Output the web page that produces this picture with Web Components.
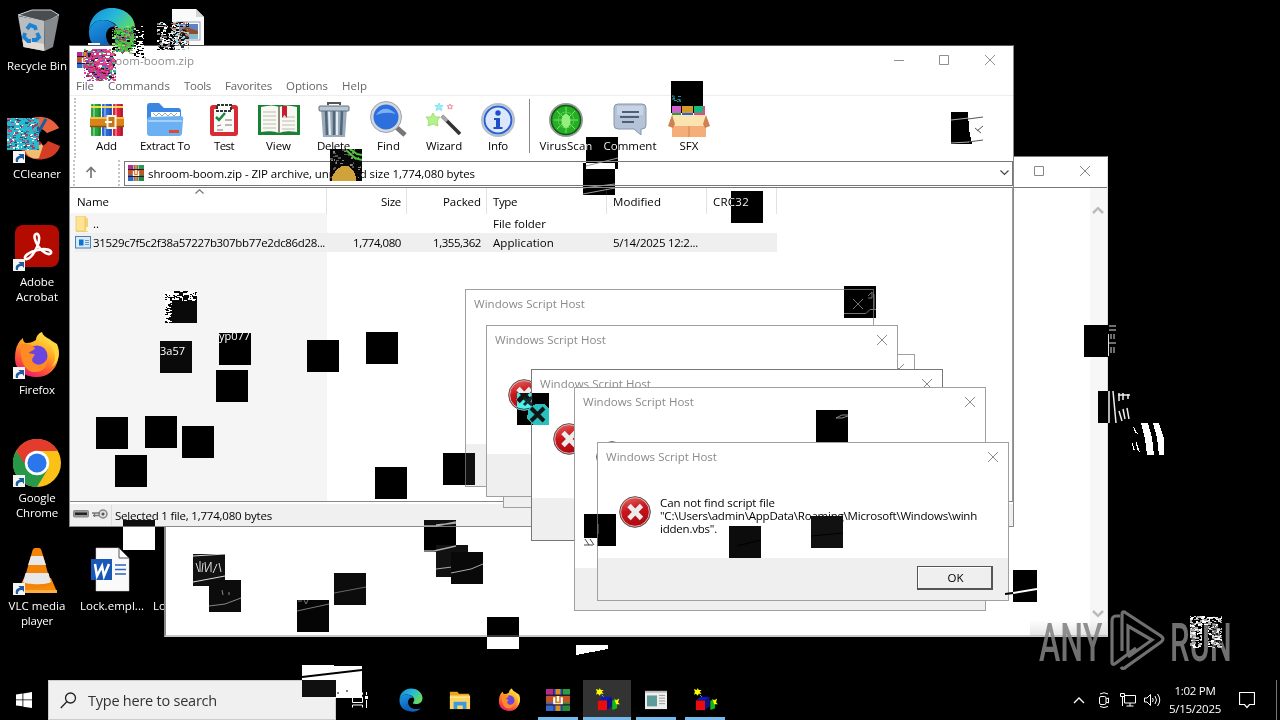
<!DOCTYPE html>
<html lang="en">
<head>
<meta charset="utf-8">
<title>Desktop</title>
<style>
html,body{margin:0;width:1280px;height:720px;overflow:hidden;background:#000}
body{font:11.5px/15px "Open Sans","Noto Sans",sans-serif;color:#000}
</style>
</head>
<body>
<desktop-shell></desktop-shell>
<script>
/* Shared base: clones markup into an open shadow root */
class Base extends HTMLElement {
  constructor(){ super(); this.attachShadow({mode:'open'}); }
  connectedCallback(){
    if (this.ready) return; this.ready = true;
    const t = document.createElement('template');
    t.innerHTML = this.view();
    this.shadowRoot.append(t.content.cloneNode(true));
    if (this.after) this.after();
  }
  a(n,d=''){ return this.hasAttribute(n) ? this.getAttribute(n) : d; }
}

const books = `<g><rect x="1" y="1" width="10" height="32" rx="1" fill="#27a53a"/><rect x="12" y="1" width="10" height="32" rx="1" fill="#2b65d9"/><rect x="23" y="1" width="10" height="32" rx="1" fill="#d9213f"/>
<path d="M4 1v32M15 1v32M26 1v32" stroke="#fff" stroke-opacity=".35" stroke-width="2"/><path d="M9.500 1v32M20.500 1v32M31.500 1v32" stroke="#000" stroke-opacity=".2" stroke-width="2"/>
<path d="M1 4h10M12 4h10M23 4h10" stroke="#f2dc4a" stroke-width="2"/><rect y="14" width="34" height="10" fill="#d98419"/><path d="M0 15h34" stroke="#f6c04e" stroke-width="2"/><path d="M0 23.500h34" stroke="#8e4d0b" stroke-width="1.500"/>
<rect x="17.500" y="13" width="8" height="12" fill="#c4761a" stroke="#fff4d8" stroke-width="2"/><path d="M15 19h7" stroke="#fff" stroke-width="2"/></g>`;
const rarSmall = `<rect width="5" height="16" fill="#b52a8a"/><rect x="5.500" width="5" height="16" fill="#3064c8"/><rect x="11" width="5" height="16" fill="#2c9c45"/><rect y="5" width="16" height="6" fill="#c2542a"/><rect x="0" y="10" width="5" height="6" fill="#2f69c9"/><rect x="11" y="10" width="5" height="6" fill="#258b3a"/><path d="M6.500 0h3v16h-3z" fill="#d88c22"/><path d="M5.500 6v5h5V6M8 5v4" stroke="#fff" stroke-width="1.400" fill="none"/><path d="M0 4.500h16M0 11.500h16" stroke="#301634"/>`;
const edge = `<defs><linearGradient id="eg" x2="1" y2=".6"><stop stop-color="#1487d6"/><stop offset=".5" stop-color="#25b8dc"/><stop offset="1" stop-color="#63dd5c"/></linearGradient><linearGradient id="eb" x2=".6" y2="1"><stop stop-color="#1c9be6"/><stop offset="1" stop-color="#0b4fa8"/></linearGradient></defs>
<path d="M1 23C2 9 12 1 24 1c14 0 23 10 23 19 0 8-6 12-13 12-6 0-7-2-5-4 1-2 2-4 1-7-2-5-8-8-15-8C8 13 3 17 1 23z" fill="url(#eg)"/><path d="M1 23c3-7 8-10 14-10 6 0 11 3 14 7-6-2-11 2-11 9 0 8 7 15 18 14 3 0 5-1 7-2-6 5-12 6-18 6C10 47 0 37 1 23z" fill="url(#eb)"/><path d="M18 29c0 8 7 13 16 13 5 0 8-1 10-3-4 6-10 8-17 8-9-1-14-10-9-18z" fill="#1463b8"/>`;
const fox = `<defs><linearGradient id="fg" x1=".8" x2=".3" y2="1"><stop stop-color="#fff04a"/><stop offset=".4" stop-color="#ffab24"/><stop offset=".75" stop-color="#ff5036"/><stop offset="1" stop-color="#e51a75"/></linearGradient></defs>
<path d="M5 13c1-3 4-5 5-6 0 4 2 5 4 5 3 0 6-1 9-3 0-4 3-7 6-8 0 6 5 7 8 12l2-2c6 6 8 14 5 21-3 8-10 14-20 14C11 46 2 39 2 27c0-6 1-11 3-14z" fill="url(#fg)"/><circle cx="24" cy="25" r="10.500" fill="#6b45e0"/><path d="M8 13c4-1 10 0 14 4-1 3-5 3-6 5 2 1 4 0 6 2-3 3-4 6-1 8 5 4 11 0 13-4 1 8-5 14-13 13C9 40 7 24 8 13z" fill="#ff8b25"/><path d="M29 1c-4 8 9 9 12 20 2 6 1 11-3 15 8-4 10-14 6-23l-5-3c-3-3-9-4-10-9z" fill="#ffd43e"/>`;
const ICONS = {
 recycle:[48,48,`<path d="M5 8l14-5h19l8 5-13 7z" fill="#4a4d50" stroke="#d2d5d7"/><path d="M5 9l26 5 .500 30-21-4z" fill="#b9bdc0"/><path d="M31 14l15-5-6 31-8.500 4z" fill="#85898d"/><path d="M9.500 33l21.500 4 .500 7-21-4z" fill="#e2dcd4"/><path d="M14 22l3-4 5 2 1 3M12 26l-1 4 4 4h3M24 26l2 4-3 3h-4" fill="none" stroke="#1e82d2" stroke-width="3.800"/>`],
 edge:[48,48,edge],
 fox:[48,48,fox],
 photo:[48,48,`<path d="M9 2h24l8 8v36H9z" fill="#fafafa"/><path d="M33 2v8h8z" fill="#d5d5d5"/><rect x="14" y="15" width="23" height="18" fill="#fff" stroke="#8ba0b8"/><rect x="16" y="17" width="19" height="7" fill="#5f84c4"/><path d="M16 25l7-5 12 4v3H16z" fill="#8f4d29"/><rect x="16" y="27" width="19" height="5" fill="#86b8cb"/>`],
 cc:[48,48,`<path d="M46 13C40 3 30 0 19 3 6 7 2 19 6 30c4 13 18 17 29 13 6-2 10-6 12-12l-12-5c-4 7-12 7-15 1-4-8 1-15 8-15 3 0 5 2 6 6z" fill="#d43c26"/><path d="M46 13C40 3 30 0 19 3 11 6 6 13 5 20c9-10 20-11 29-2z" fill="#e8623f"/><path d="M33 4L20 27" stroke="#145f9c" stroke-width="3"/><path d="M11 30c5-6 17-5 19 1l-4 12c-6 2-14-1-15-13z" fill="#eebd72"/><path d="M13 28c5-5 14-4 16 1l-8 3z" fill="#cf1c37"/>`],
 acro:[48,48,`<rect x="2" y="2" width="44" height="42" rx="8" fill="#b30b00"/><path d="M23 11c4-1 4 7 1 13-3 7-8 13-11 12-4-2 4-8 12-9 8-2 14 0 13 3-2 3-9-1-13-7-3-5-5-11-2-12z" fill="none" stroke="#fff" stroke-width="2.600"/>`],
 chrome:[48,48,`<circle cx="24" cy="24" r="24" fill="#fbc116"/><path d="M24 12h20.800A24 24 0 0 0 3.200 12L13 29z" fill="#e33b2e"/><path d="M3.200 12A24 24 0 0 0 24 48l11-18-20 0z" fill="#279847"/><circle cx="24" cy="24" r="12.200" fill="#fff"/><circle cx="24" cy="24" r="9.600" fill="#2a76ea"/>`],
 vlc:[48,48,`<path d="M11 31h27l6 14H4z" fill="#f58a0b"/><path d="M4 43h40v3H4z" fill="#ffae42"/><path d="M22 1h4q2 0 3 4l9 32c-3 5-25 5-28 0L19 5q1-4 3-4z" fill="#f58308"/><path d="M18 9h12l3 9H15zM12.500 26h23l2.500 9c-4 3-24 3-28 0z" fill="#e8e8e8"/>`],
 word:[48,48,`<path d="M8 1h23l10 10v33H8z" fill="#fafafa" stroke="#ccc" stroke-width=".5"/><path d="M31 1v10h10z" fill="#fff" stroke="#555"/><path d="M27 18h11M27 22.500h11M27 27h11" stroke="#2b66bd" stroke-width="1.500"/><rect x="3" y="12" width="21" height="21" fill="#1a58b8"/><path d="M7 17l2 12 5-10 2 10 5-12" stroke="#fff" stroke-width="2.500" fill="none"/>`],
 link:[12,12,`<path d="M0 0h12v12H0z" fill="#f5f5f5"/><path d="M3 11C2 7 4 5 7 5L5.500 3H11v6L9.300 7C6 7 5 8 5 11z" fill="#1f5c9e"/>`],
 add:[34,34,books],
 rar:[16,16,rarSmall],
 extract:[38,36,`<path d="M1 4q0-3 3-3h9l5 5h14q3 0 3 3v10H1z" fill="#3a86e0"/><path d="M5 10h29v12H5z" fill="#fff"/><path d="M7 11l3 3 3-3 3 3 3-3 3 3 3-3 3 3 3-3" stroke="#9aa" fill="none"/><path d="M1 18q0-3 3-3l30-1q4 0 3 4l-1 13q0 3-3 3H4q-3 0-3-3z" fill="#6bb0f3"/><path d="M2 19h34" stroke="#a4d0fb" stroke-width="2"/><rect x="23" y="28" width="10" height="3" fill="#e2492c"/>`],
 test:[30,34,`<rect x="1" y="2" width="28" height="31" rx="3" fill="#d92b34"/><path d="M5 6h20v23H5z" fill="#fbfaf8"/><path d="M8 2h14v6H8z" fill="#fff" stroke="#333" stroke-width="2" stroke-dasharray="3 1"/><path d="M7 14l3 3 6-7" stroke="#17853b" stroke-width="2.500" fill="none"/><path d="M16 17h7M16 22h7M8 23l4-1M8 27h6" stroke="#777"/>`],
 view:[44,34,`<path d="M1 2h42v30H1z" fill="#198135"/><path d="M4 4q12-3 18 0 6-3 18 0v25q-12-2-18 1-6-3-18-1z" fill="#f9f8f1"/><path d="M22 4v26" stroke="#8d8a80" stroke-width="2"/><path d="M6 9h13M6 13h13M6 17h13M6 21h13M6 25h13M25 14h13M25 18h13M25 22h13M25 26h13" stroke="#bbb"/><path d="M25 3h5v12l-2.500-3-2.500 3z" fill="#c81e33"/>`],
 del:[32,38,`<path d="M3 8h26l-2 28H5z" fill="#9aacbc"/><path d="M8 10l1 24M16 10v24M24 10l-1 24" stroke="#536576" stroke-width="2.500"/><path d="M11 10l1 24M19 10v24" stroke="#e4edf4" stroke-width="2"/><rect x="1" y="5" width="30" height="5" rx="1" fill="#b8c7d3" stroke="#5d6f80"/><path d="M10 4V2h12v2" fill="none" stroke="#555" stroke-width="2"/>`],
 find:[38,38,`<path d="M25 25l10 9" stroke="#777" stroke-width="5"/><circle cx="16" cy="16" r="14" fill="#2d6fdc" stroke="#d3d7dc" stroke-width="3"/><circle cx="16" cy="16" r="15.500" fill="none" stroke="#9aa3ad"/><path d="M6 14q8-12 20-1-10-3-20 1z" fill="#7eb0f4"/>`],
 wizard:[38,38,`<path d="M17 15l18 18" stroke="#333" stroke-width="3.500"/><path d="M17 15l5 5" stroke="#aaa" stroke-width="3.500"/><path d="M8 12l2 4 5 0-3 4 1 5-5-2-5 2 1-5-3-4 5 0z" fill="#b6f28a" stroke="#9be373"/><path d="M14 2l1 2.500h3l-2 2 1 3-3-1.500-3 1.500 1-3-2-2h3z" fill="#9ceef8" stroke="#6bdbeb" stroke-width=".7"/><path d="M25 3l.8 1.700h2l-1.300 1.300.4 2-1.900-1-1.900 1 .4-2-1.300-1.300h2z" fill="#fff" stroke="#f08b9a"/>`],
 info:[36,36,`<circle cx="18" cy="18" r="16" fill="#dfeafa" stroke="#b6bfc9" stroke-width="2"/><circle cx="18" cy="18" r="13.500" fill="#dbe8fb" stroke="#2d5fd0" stroke-width="2"/><circle cx="18" cy="11" r="2.700" fill="#1e50c8"/><path d="M14 16h6v9h2.500v2h-9v-2H16v-7h-2z" fill="#1e50c8"/>`],
 virus:[36,36,`<circle cx="18" cy="18" r="16" fill="#1f9a20" stroke="#9a9a9a" stroke-width="2"/><circle cx="18" cy="18" r="14.500" fill="#25ae25" stroke="#0e5d12" stroke-width="1.500"/><path d="M6 18h24M18 5v26M9 9l18 18M27 9L9 27" stroke="#7fe56d"/><circle cx="18" cy="18" r="8" fill="none" stroke="#53cf4a"/><ellipse cx="18" cy="19" rx="4.500" ry="7" fill="#96ee80"/>`],
 comment:[34,36,`<path d="M5 2h24q4 0 4 4v17q0 4-4 4h-1l0 6-7-6H5q-4 0-4-4V6q0-4 4-4z" fill="#b4c3d6" stroke="#8696ab"/><path d="M4 4h26v9H4z" fill="#d5dfeb" opacity=".6"/><path d="M9 10h17M7 15h19M9 20h12" stroke="#4d6078" stroke-width="1.800"/>`],
 sfx:[42,38,`<path d="M4 5h9v12H4z" fill="#2d9e30"/><path d="M14 5h11v12H14z" fill="#2a64d8"/><path d="M26 5h11v12H26z" fill="#ec447e"/><path d="M4 16h34v20H4z" fill="#f5ad79"/><path d="M21 24v12" stroke="#d08450"/><path d="M4 14h34l-2 11H6z" fill="#fbe3b0"/><path d="M4 14L0 25l5 2 2-4zM38 14l4 11-5 2-2-4z" fill="#cd8250"/>`],
 folder:[14,16,`<path d="M1 0h9l3 3v13H1z" fill="#f5d477"/><path d="M1 0h9v15H1z" fill="#ffe394" stroke="#e6bd55" stroke-width=".6"/><path d="M11 11h2v4h-2z" fill="#fff5cc"/>`],
 exe:[16,13,`<rect x=".5" y=".5" width="15" height="11.500" fill="#d9eaf7" stroke="#4d7fa8"/><rect x="4" y="3.500" width="4.500" height="6" fill="#0a73d0"/><path d="M10 4.500h4M10 6.500h4M10 8.500h4" stroke="#5f9bd0"/>`],
 drive:[16,8,`<rect x=".5" y=".5" width="15" height="6.500" rx="1" fill="#999" stroke="#888"/><rect x="2" y="2.500" width="12" height="2.500" fill="#222"/>`],
 key:[16,10,`<circle cx="11" cy="5" r="4" fill="#ddd" stroke="#888" stroke-width="1.500"/><circle cx="11" cy="5" r="1.500" fill="#555"/><path d="M0 4h8M1 6.500h6M2.500 4v4" stroke="#777" fill="none" stroke-width="1.300"/>`],
 err:[34,34,`<defs><linearGradient id="er" y2="1" x2=".3"><stop stop-color="#e8706a"/><stop offset=".5" stop-color="#c9151b"/><stop offset="1" stop-color="#ae0a12"/></linearGradient></defs><circle cx="17" cy="17" r="15.300" fill="url(#er)" stroke="#5c5252" stroke-width="1"/><circle cx="17" cy="17" r="14.300" fill="none" stroke="#d9b1ae" stroke-width="1"/><path d="M11 10.500l12.500 13M23.500 10.500L11 23.500" stroke="#ececec" stroke-width="4.800"/>`],
 x:[12,12,`<path d="M1 1l10 10M11 1L1 11" stroke="currentColor" fill="none"/>`],
 sq:[12,12,`<path d="M1.500 1.500h9v9h-9z" stroke="currentColor" fill="none"/>`],
 min:[12,12,`<path d="M1 6.500h10" stroke="currentColor" fill="none"/>`],
 up:[12,12,`<path d="M6 12V1.500M1.500 6L6 1.500 10.500 6" stroke="#777" stroke-width="1.700" fill="none"/>`],
 chevd:[9,6,`<path d="M.5.500L4.500 4.500 8.500.500" stroke="#444" stroke-width="1.200" fill="none"/>`],
 chevu:[9,5,`<path d="M.5 4.500L4.500.800 8.500 4.500" stroke="#777" stroke-width="1.200" fill="none"/>`],
 scu:[12,9,`<path d="M1 7L6 2.200 11 7" stroke="#bbb" stroke-width="2.500" fill="none"/>`],
 scd:[12,9,`<path d="M1 2L6 6.800 11 2" stroke="#bbb" stroke-width="2.500" fill="none"/>`],
 win:[16,16,`<path d="M0 2.500l6.500-1V7.500H0zM7.300 1.400L16 0v7.500H7.300zM0 8.300h6.500v6L0 13.400zM7.300 8.300H16V16l-8.700-1.300z" fill="#fff"/>`],
 mag:[17,17,`<circle cx="10.500" cy="6" r="5" stroke="#222" stroke-width="1.300" fill="none"/><path d="M7 9.500L.8 16" stroke="#222" stroke-width="1.300"/>`],
 task:[16,16,`<path d="M.5.500v2M.5 2.500h10V.5M.5 5h10v5.500H.5zM.5 15.500V13h10v2.500M14.500 0v3M14.500 8v8" stroke="#fff" fill="none"/><path d="M13 4h3v3h-3z" fill="#fff"/>`],
 explorer:[24,22,`<path d="M1 2h8l2 2h11v17H1z" fill="#e9a51b"/><path d="M1 6h22v15H1z" fill="#ffd561"/><path d="M5 13h14v8h-4v-4H9v4H5z" fill="#3c9be0"/><path d="M1 8h22" stroke="#fff0a8"/>`],
 cube:[26,26,`<path d="M1 1l3 1 1-2 1 2 3 0-2 2 2 2-3 0-1 2-2-2-2 1 1-3z" fill="#ff0"/><path d="M7 7l3 3" stroke="#999"/><path d="M3 13l5-4h9l-4 4z" fill="#0a1bb8"/><path d="M3 13h9.500v10H3z" fill="#e90c0c"/><path d="M12.500 13l5-4v10l-5 4z" fill="#10108a"/><path d="M18 13l5-1v9l-5 2z" fill="#12b91b"/><path d="M20 11l2 2 3-2-1 4 2 2-4 0z" fill="#ff0"/>`],
 app:[22,22,`<path d="M0 1h22v20H0z" fill="#eee"/><path d="M2 6h10v12H2z" fill="#5d9c99"/><path d="M14 6h6M14 9h6M14 12h6M14 15h6" stroke="#999"/><path d="M0 2h22" stroke="#bbb" stroke-width="2"/>`],
 tchev:[12,8,`<path d="M1 7l5-5 5 5" stroke="#fff" stroke-width="1.300" fill="none"/>`],
 cam:[12,16,`<rect x="1.500" y="4.500" width="6.500" height="8" rx="1.500" stroke="#fff" fill="none"/><path d="M8 7l2.500-1v5L8 10M2 2q4-2.500 8 0M2 14.500q4 2 8 0" stroke="#fff" fill="none"/>`],
 net:[16,14,`<path d="M4.500 2.500h11v7.500h-11zM10 10v3M6.500 13h7M.5.500h4v3h-4zM2.500 4v9" stroke="#fff" fill="none"/>`],
 vol:[17,14,`<path d="M.5 5v4h2.500l3.500 3.500v-11L3 5z" stroke="#fff" fill="none"/><path d="M8.500 5q1.500 2 0 4M11 3q3 4 0 8M13.500 1q4.500 6 0 12" stroke="#fff" fill="none"/>`],
 note:[16,17,`<path d="M.5.500h15v12h-5L8 15.500 5.500 12.500h-5z" stroke="#fff" stroke-width="1.200" fill="none"/>`]
};

customElements.define('ui-icon', class extends Base {
  view(){
    const [w,h,s] = ICONS[this.a('name')];
    const W = this.a('w',w), H = this.a('h',h);
    return `<style>:host{display:block;flex:none;width:${W}px;height:${H}px}svg{display:block}</style><svg width="${W}" height="${H}" viewBox="0 0 ${w} ${h}" preserveAspectRatio="none">${s}</svg>`;
  }
});

/* Text run whose tracking is tuned to a given advance width */
customElements.define('fit-text', class extends Base {
  view(){ return `<style>:host{display:inline-block;flex:none;white-space:nowrap}span{display:inline-block}</style><span><slot></slot></span>`; }
  after(){
    const w = +this.a('w',0); if(!w) return;
    const n = this.textContent.length, now = this.shadowRoot.querySelector('span').getBoundingClientRect().width;
    if(now) this.style.letterSpacing = ((w-now)/n).toFixed(3)+'px';
  }
});

customElements.define('desk-icon', class extends Base {
  view(){
    return `<style>:host{display:flex;flex-direction:column;align-items:center;height:101px;padding-top:7px;width:74px;flex:none;color:#fff;text-align:center}
    .p{position:relative;height:48px;width:48px;margin-bottom:2.500px}.l{position:absolute;left:0;bottom:0}</style>
    <div class="p">${this.a('icon')?`<ui-icon name="${this.a('icon')}"></ui-icon>`:''}${this.hasAttribute('link')?'<ui-icon class="l" name="link"></ui-icon>':''}</div><slot></slot>`;
  }
});

customElements.define('tool-button', class extends Base {
  view(){
    return `<style>:host{display:flex;flex-direction:column;align-items:center;justify-content:space-between;width:${this.a('width')}px;height:53px;flex:none}
    .i{height:40px;display:flex;align-items:center}</style><div class="i"><ui-icon name="${this.a('icon')}"></ui-icon></div><div style="margin-top:-4px"><slot></slot></div>`;
  }
});

customElements.define('script-dialog', class extends Base {
  view(){
    return `<style>:host{position:absolute;left:${this.a('x')}px;top:${this.a('y')}px;width:${this.a('w',412)}px;height:${this.a('h')}px;box-sizing:border-box;border:1px solid #a0a0a0;background:#fff;display:flex;flex-direction:column}
    header{display:flex;justify-content:space-between;align-items:center;height:27px;padding:0 9px 2px 8px;color:#8a8a8a;flex:none}
    .b{flex:1;display:flex;padding:23px 0 0 20px;gap:8px;line-height:13px}.m{display:flex;flex-direction:column;align-items:flex-start;padding-top:1px}
    footer{height:42px;flex:none;background:#efefef;display:flex;justify-content:flex-end;align-items:center;padding-right:15px}
    button{font:inherit;box-sizing:border-box;width:76px;height:24px;margin-top:-2px;padding:0 0 0 2px;background:#efefef;border:1px solid #555;border-right-width:2px;border-bottom-width:2px;box-shadow:inset 1px 1px #fff;color:#000}</style>
    <header><fit-text w="111">Windows Script Host</fit-text><ui-icon name="x"></ui-icon></header>
    <div class="b"><ui-icon name="err"></ui-icon><div class="m"><slot></slot></div></div>
    <footer>${this.hasAttribute('ok')?'<button>OK</button>':''}</footer>`;
  }
});

customElements.define('back-window', class extends Base {
  view(){
    return `<style>:host{position:absolute;left:164px;top:156px;width:944px;height:481px;box-sizing:border-box;border:1px solid #777;border-left:2px solid #888;border-bottom:2px solid #c8c8c8;border-right-color:#ddd;background:#fff;display:flex;flex-direction:column}
    header{height:28px;display:flex;justify-content:flex-end;gap:34px;padding:0 16px 2px 0;align-items:center;color:#888;border-bottom:1px solid #777;flex:none}
    .b{flex:1;display:flex;justify-content:flex-end}.s{width:17px;background:#f7f7f7;display:flex;flex-direction:column;justify-content:space-between;align-items:center;padding:18px 2px 17px 0;box-sizing:border-box}</style>
    <header><ui-icon name="sq"></ui-icon><ui-icon name="x"></ui-icon></header><div class="b"><div class="s"><ui-icon name="scu"></ui-icon><ui-icon name="scd"></ui-icon></div></div>`;
  }
});

customElements.define('archive-window', class extends Base {
  view(){
    const T=(i,w,l,lw)=>`<tool-button icon="${i}" width="${w}"><fit-text w="${lw}">${l}</fit-text></tool-button>`;
    return `<style>:host{position:absolute;left:69px;top:45px;width:945px;height:482px;box-sizing:border-box;border:1px solid #8a8a8a;border-top-color:#555;background:#fff;display:flex;flex-direction:column}
    header{height:28px;flex:none;display:flex;align-items:center;color:#8f8f8f;padding:0 17px 3px 7px}header fit-text{margin-left:5px;margin-right:auto}
    .c{display:flex;gap:34px}.c :first-child{margin-right:-1px}nav{height:16px;flex:none;display:flex;align-items:center;gap:14px;padding:0 0 2px 6px;color:#666;border-bottom:1px solid #eee}
    .t{display:flex;height:64px;flex:none;padding-left:4px}.dots{width:0;border-left:2px dotted #c4c4c4;margin:2px 3px 2px 0}.t tool-button{margin-top:4px}
    .sep{width:1px;background:#888;margin:3px 6px 7px}
    .a{display:flex;height:26px;flex:none;align-items:center;padding-left:3px}.a .dots{height:26px;margin:0}.a .up{margin:0 21px 2px 10px}
    .combo{box-sizing:border-box;flex:1;height:25px;border:1px solid #777;display:flex;align-items:center;padding:0 3px 0 3px;margin-left:4px;gap:4px}.combo fit-text{margin-right:auto}
    .l{margin-top:1px;flex:1;border-top:1px solid #777;border-right:1px solid #999;position:relative;display:flex;flex-direction:column;background:linear-gradient(#f5f5f5,#f5f5f5) 0 25px/257px 400px no-repeat}
    .g{display:grid;grid-template-columns:257px 80px 80px 120px 100px 70px;height:19px;align-items:center;width:707px;flex:none}
    .g>div{box-sizing:border-box;padding:0 6px;display:flex;align-items:center}.g>div:nth-child(2),.g>div:nth-child(3){justify-content:flex-end}
    .h>div:nth-child(2),.h>div:nth-child(3){padding-right:5px}
    .h{height:27px;align-items:start;margin-bottom:-1px}.h>div{height:26px;border-right:1px solid #e2e2e2}.h>div:first-child{padding-left:7px}
    .n{gap:2px}.sel{background:linear-gradient(#efefef,#efefef) 5px 0 no-repeat}.r>div:first-child{padding-left:5px}
    .sort{position:absolute;left:125px;top:1px}
    footer{height:22px;border-top:1px solid #888;box-shadow:inset 0 2px #fff;background:#f0f0f0;display:flex;align-items:center;padding-left:3px;flex:none;gap:3px;padding-top:2px}
    footer i{width:1px;height:20px;background:#ddd}footer ui-icon{margin-bottom:2px}</style>
    <header><ui-icon name="rar"></ui-icon><fit-text w="96">shroom-boom.zip</fit-text><div class="c"><ui-icon name="min"></ui-icon><ui-icon name="sq"></ui-icon><ui-icon name="x"></ui-icon></div></header>
    <nav><fit-text w="18">File</fit-text><fit-text w="62">Commands</fit-text><fit-text w="27">Tools</fit-text><fit-text w="47">Favorites</fit-text><fit-text w="42">Options</fit-text><fit-text w="25">Help</fit-text></nav>
    <div class="t"><span class="dots"></span>${T('add',55,'Add',21)}${T('extract',62,'Extract To',50)}${T('test',56,'Test',20)}${T('view',53,'View',25)}${T('del',57,'Delete',33)}${T('find',53,'Find',23)}${T('wizard',58,'Wizard',36)}${T('info',50,'Info',20)}<span class="sep"></span>${T('virus',60,'VirusScan',53)}${T('comment',68,'Comment',53)}${T('sfx',50,'SFX',19)}</div>
    <div class="a"><span class="dots"></span><ui-icon class="up" name="up"></ui-icon><span class="dots"></span><div class="combo"><ui-icon name="rar"></ui-icon><fit-text w="327">shroom-boom.zip - ZIP archive, unpacked size 1,774,080 bytes</fit-text><ui-icon name="chevd"></ui-icon></div></div>
    <div class="l"><ui-icon class="sort" name="chevu"></ui-icon>
      <div class="g h"><div><fit-text w="32">Name</fit-text></div><div><fit-text w="20">Size</fit-text></div><div><fit-text w="38">Packed</fit-text></div><div><fit-text w="24">Type</fit-text></div><div><fit-text w="48">Modified</fit-text></div><div><fit-text w="36">CRC32</fit-text></div></div>
      <div class="g r"><div class="n"><ui-icon name="folder"></ui-icon>&thinsp;..</div><div></div><div></div><div><fit-text w="53">File folder</fit-text></div><div></div><div></div></div>
      <div class="g r sel"><div class="n"><ui-icon name="exe"></ui-icon><fit-text w="232">31529c7f5c2f38a57227b307bb77e2dc86d28...</fit-text></div><div><fit-text w="48">1,774,080</fit-text></div><div><fit-text w="48">1,355,362</fit-text></div><div><fit-text w="61">Application</fit-text></div><div><fit-text w="85">5/14/2025 12:2...</fit-text></div><div></div></div>
    </div>
    <footer><ui-icon name="drive"></ui-icon><ui-icon name="key"></ui-icon><i></i><fit-text w="157">Selected 1 file, 1,774,080 bytes</fit-text></footer>`;
  }
});

customElements.define('task-bar', class extends Base {
  view(){
    const B=(n,w,h,c='')=>`<div class="b ${c}"><ui-icon name="${n}" w="${w}" h="${h}"></ui-icon></div>`;
    return `<style>:host{position:absolute;left:0;bottom:0;width:1280px;height:40px;background:#000;color:#fff;display:flex;align-items:stretch}
    .b{width:48px;height:40px;box-sizing:border-box;display:flex;align-items:center;justify-content:center;flex:none;margin-right:1px}
    .run{background:linear-gradient(#76b9ed,#76b9ed) 50% 100%/40px 3px no-repeat}.act{background:linear-gradient(#76b9ed,#76b9ed) 50% 100%/48px 3px no-repeat #333}
    .s{width:288px;box-sizing:border-box;background:#f0f0f0;border:1px solid #ccc;color:#333;display:flex;align-items:center;gap:11px;padding-left:11px;font-size:14.500px;line-height:20px;margin-right:0}
    .s fit-text{margin-top:2px}
    .tray{margin-left:auto;display:flex;align-items:center;gap:10px;padding-right:3px}.clock{display:flex;flex-direction:column;align-items:center;line-height:18px;margin-left:-2px}.end{height:40px;border-left:1px solid #777;margin-left:11px}</style>
    <div class="b" style="margin:0">${'<ui-icon name="win"></ui-icon>'}</div>
    <div class="s"><ui-icon name="mag"></ui-icon><fit-text w="129">Type here to search</fit-text></div>
    <div class="b" style="margin-right:3px"><ui-icon name="task"></ui-icon></div>
    ${B('edge',24,24)}${B('explorer',22,20)}${B('fox',23,24)}${B('rar',24,22,'run')}${B('cube',25,25,'act')}${B('app',22,20,'run')}${B('cube',25,25,'run')}
    <div class="tray"><ui-icon name="tchev"></ui-icon><ui-icon style="margin-left:3px" name="cam"></ui-icon><ui-icon name="net"></ui-icon><ui-icon style="margin-left:-2px" name="vol"></ui-icon><div class="clock"><fit-text w="41">1:02 PM</fit-text><fit-text w="52">5/15/2025</fit-text></div><ui-icon name="note" style="margin-left:8px"></ui-icon><span class="end"></span></div>`;
  }
});

/* Inverting square: flips whatever lies beneath it */
customElements.define('glitch-tile', class extends Base {
  view(){
    return `<style>:host{position:absolute;left:${this.a('x')}px;top:${this.a('y')}px;width:${this.a('w',32)}px;height:${this.a('h',32)}px;background:#fff;mix-blend-mode:difference}</style>`;
  }
});

/* Patch with streaks or seeded pixel noise in a palette */
customElements.define('glitch-art', class extends Base {
  view(){
    const w=+this.a('w',32), h=+this.a('h',32), d=+this.a('density',0), pal=this.a('colors','#fff').split(' ');
    let s=+this.a('seed',7), out='';
    const r=()=>(s=(s*1103515245+12345)%2147483648)/2147483648;
    for(let y=0;y<h;y++)for(let x=0;x<w;){
      const L=1+Math.floor(r()*3);
      if(r()<d) out+=`<rect x="${x}" y="${y}" width="${Math.min(L,w-x)}" height="${r()<.4?2:1}" fill="${pal[Math.floor(r()*pal.length)]}"/>`;
      x+=L;
    }
    return `<style>:host{position:absolute;left:${this.a('x')}px;top:${this.a('y')}px;width:${w}px;height:${h}px;overflow:hidden}svg{display:block}</style>
    <svg width="${w}" height="${h}" shape-rendering="crispEdges">${this.a('bg')?`<rect width="${w}" height="${h}" fill="${this.a('bg')}"/>`:''}<path d="${this.a('under')}" fill="${this.a('underink','#fff')}"/>${out}<path d="${this.a('fill')}" fill="${this.a('ink','#fff')}"/><path d="${this.a('line')}" stroke="${this.a('stroke','#aaa')}" stroke-width="${this.a('sw',1)}" fill="none" shape-rendering="auto"/></svg>`;
  }
});

customElements.define('water-mark', class extends Base {
  view(){
    return `<style>:host{position:absolute;left:1030px;top:604px;width:210px;height:76px;opacity:.88}svg{position:absolute;left:0;top:0}
    span{position:absolute;top:11px;font:500 53px/56px Roboto,"Liberation Sans",sans-serif;color:#808080;transform-origin:0 0;white-space:nowrap}</style>
    <svg width="210" height="76"><defs><linearGradient id="gl" y2="1" x2="0"><stop stop-color="#aaa" stop-opacity="0"/><stop offset="1" stop-color="#aaa" stop-opacity=".35"/></linearGradient></defs><rect width="77" height="16" y="16" fill="url(#gl)"/>
    <path d="M90 12h-4q-4 0-4 5v41q0 4 4 1l20-15M92 47V11q0-5 4-2l35 23q4 3 0 6L96 63q-3 3-5 0M98 49V22l24 14-24 17" fill="none" stroke="#808080" stroke-width="3.200"/></svg>
    <span style="left:9px" data-w="63">ANY</span><span style="left:140px" data-w="62">RUN</span>`;
  }
  after(){
    this.shadowRoot.querySelectorAll('span').forEach(e=>{ e.style.transform=`scaleX(${e.dataset.w/e.offsetWidth})`; });
  }
});

customElements.define('desktop-shell', class extends Base {
  view(){
    const F=(w,t)=>`<fit-text w="${w}">${t}</fit-text>`;
    const inv=[[844,286],[816,410],[366,332],[160,341],[165,291],[375,467],[443,453],[731,191],[586,137],[583,163],[123,520,32,30],[487,617],[517,393],[584,514],[729,526],[811,516],[1013,570,24,32],[193,554],[209,580],[297,600],[334,573],[424,520],[671,81]];
    const solid=[[307,340],[216,370],[219,333],[96,417],[145,416],[182,426],[115,455]];
    return `<style>:host{display:block;position:relative;width:1280px;height:720px;overflow:hidden;background:#000;isolation:isolate}
    .cols{display:flex;gap:1px}.col{display:flex;flex-direction:column;width:74px}.gap{height:432px}
    .frag{position:absolute;color:#fff;height:14px;line-height:14px;font-size:11px}</style>
    <div class="cols"><div class="col">
      <desk-icon icon="recycle">${F(60,'Recycle Bin')}</desk-icon><desk-icon icon="cc" link>${F(48,'CCleaner')}</desk-icon><desk-icon icon="acro" link>${F(34,'Adobe')}${F(42,'Acrobat')}</desk-icon><desk-icon icon="fox" link>${F(36,'Firefox')}</desk-icon><desk-icon icon="chrome" link>${F(37,'Google')}${F(42,'Chrome')}</desk-icon><desk-icon icon="vlc" link>${F(57,'VLC media')}${F(32,'player')}</desk-icon></div>
      <div class="col"><desk-icon icon="edge" link></desk-icon><div class="gap"></div><desk-icon icon="word">${F(64,'Lock.empl...')}</desk-icon></div>
      <div class="col"><desk-icon icon="photo"></desk-icon><div class="gap"></div><desk-icon><div style="width:68px;text-align:left">Lo</div></desk-icon></div></div>
    <back-window></back-window>
    <archive-window></archive-window>
    <script-dialog x="465" y="289" w="409" h="198"></script-dialog>
    <script-dialog x="503" y="354" h="154"></script-dialog>
    <script-dialog x="486" y="325" h="172"></script-dialog>
    <script-dialog x="531" y="369" h="172" style="border-color:#777"></script-dialog>
    <script-dialog x="574" y="387" h="224"></script-dialog>
    <script-dialog x="597" y="442" h="159" ok>${F(115,'Can not find script file')}${F(317,'"C:\\Users\\admin\\AppData\\Roaming\\Microsoft\\Windows\\winh')}${F(57,'idden.vbs".')}</script-dialog>
    <water-mark></water-mark>
    <task-bar></task-bar>
    ${inv.map(t=>`<glitch-tile x="${t[0]}" y="${t[1]}" w="${t[2]||32}" h="${t[3]||32}"></glitch-tile>`).join('')}
    ${solid.map(t=>`<glitch-art x="${t[0]}" y="${t[1]}" bg="#000"></glitch-art>`).join('')}
    <glitch-art x="436" y="545" bg="#111" line="M0 24L16 22 32 18"></glitch-art><glitch-art x="451" y="552" bg="#090909" line="M0 21L20 17 32 12"></glitch-art>
    <glitch-art x="424" y="520" line="M0 6h12l20-4M12 5l20-2M0 31h10l22-5" sw="1.500"></glitch-art>
    <glitch-art x="165" y="291" h="10" density=".45" seed="3"></glitch-art><glitch-art x="165" y="301" w="7" h="22" density=".5" seed="5"></glitch-art>
    <glitch-art x="844" y="286" line="M0 27.500h22l4-4h6M24 10l4-4v6h-4M30 8v16" stroke="#777"></glitch-art>
    <glitch-art x="816" y="410" line="M20 8l6-3h6M20 8h6l6-2" stroke="#888"></glitch-art>
    <glitch-art x="586" y="137" line="M0 29L32 21" stroke="#999"></glitch-art><glitch-art x="583" y="163" line="M0 25L32 21M0 31L32 25" stroke="#999"></glitch-art>
    <glitch-art x="193" y="554" bg="#111" line="M0 2L32 0M0 28L32 22M3 9l3 9M7 7v11M9 18l1-9M12 8l1 10 5-10v10M20 19l4-9M26 9l2 9" stroke="#ddd"></glitch-art>
    <glitch-art x="209" y="580" bg="#0c0c0c" line="M0 26L16 24 32 18M13 10l1 5M20 12v3" stroke="#888"></glitch-art>
    <glitch-art x="297" y="600" bg="#050505" line="M0 11L32 4M1 1h4M7 0l2 4 2-4" stroke="#777"></glitch-art>
    <glitch-art x="334" y="573" bg="#0c0c0c" line="M0 20L32 14" stroke="#666"></glitch-art>
    <glitch-art x="729" y="526" bg="#0c0c0c" line="M8 20L32 14" stroke="#000"></glitch-art><glitch-art x="811" y="516" bg="#111" line="M0 20L32 17" stroke="#000"></glitch-art>
    <glitch-art x="584" y="514" line="M14 10v10" stroke="#777"></glitch-art><glitch-art x="584" y="538" w="13" h="8" bg="#fff" line="M1 1l4 6M6 1l4 6M0 7h9" stroke="#444"></glitch-art>
    <glitch-art x="1005" y="570" line="M0 24L32 20" stroke="#000" sw="2"></glitch-art><glitch-art x="1013" y="570" w="24" line="M0 23L24 19" stroke="#fff" sw="2"></glitch-art>
    <glitch-art x="517" y="393" line="M7 5l8 7M15 4l-8 8" stroke="#172a2d" sw="3"></glitch-art><glitch-art x="525" y="403" w="24" h="22" fill="M4 5l7-4h8l5 4v17H8L2 15z" ink="#2bc0c0" line="M6 5l13 13M19 5L6 18" stroke="#101616" sw="4"></glitch-art>
    <glitch-art x="671" y="81" h="21" bg="#000"></glitch-art><glitch-art x="672" y="95" w="9" h="7" density=".4" colors="#159aa5 #155"></glitch-art>
    <glitch-art x="951" y="112" bg="#fff" fill="M0 0h17l1 18 3 14H0z" ink="#000" line="M24 16l6 5M32 14l-6 5M17 7l15-2M17 30l15-2" stroke="#555"></glitch-art><glitch-art x="951" y="112" w="18" line="M0 8L18 6M0 31l18-1" stroke="#aaa"></glitch-art>
    <glitch-art x="330" y="149" bg="#080808" density=".12" colors="#555 #888" fill="M2 28l4-7 6-4h7l5 6 2 5v4H2z" ink="#cfa23c" line="M16 1l9 8 7 2M20 0l7 5 5 1" stroke="#4bc832" sw="2"></glitch-art>
    <glitch-art x="84" y="49" under="M2 6l10-6h12l8 12-6 16-12 4L0 18z" underink="#c83f86" density=".5" seed="11" colors="#e23b9c #e95b88 #3bd45a #8c3bd8 #24a7af #b81764 #fff #222"></glitch-art>
    <glitch-art x="112" y="26" w="24" h="28" under="M2 2h20v16l-6 8H4z" underink="#52b847" density=".4" seed="21" colors="#66d64a #b63285 #237bbb #181 #000 #92e476"></glitch-art><glitch-art x="134" y="26" w="10" density=".5" seed="23" colors="#fff #000"></glitch-art>
    <glitch-art x="157" y="22" w="18" h="28" bg="#000" density=".4" seed="33" colors="#fff #777 #ccc"></glitch-art><glitch-art x="173" y="22" w="16" h="28" density=".45" seed="34" colors="#111 #99d5dd #c77a61 #333"></glitch-art>
    <glitch-art x="7" y="118" bg="#26b9d0" density=".45" seed="41" colors="#fff #e44663 #145a7b #26b9d0 #27c5c5 #9a4470"></glitch-art>
    <glitch-art x="1084" y="325" w="24" bg="#000"></glitch-art><glitch-art x="1108" y="325" w="8" h="32" line="M1 1h7M1 5h7M3 9v5M6 9v5M1 18h7M3 22v6M6 22v6M.5 9v22" stroke="#ddd"></glitch-art>
    <glitch-art x="1098" y="391" bg="#000" line="M11 0v32M15 0l3 32M20 4h12M21 2v8M25 2v7M30 3v5M21 20l3 10M25 18l2 10M29 17l2 11" stroke="#eee" sw="1.500"></glitch-art>
    <glitch-art x="1132" y="423" fill="M9 0h7l4 15 2 17h-7l-2-16zM21 0h6l5 16v16h-5l-2-17zM1 3l5 8-3-1zM0 19l3 8H1zM4 18l4 11-3-2z"></glitch-art>
    <glitch-art x="576" y="645" h="11" fill="M0 0h32v4L0 10z"></glitch-art>
    <glitch-art x="302" y="665" h="15" bg="#fff"></glitch-art><glitch-art x="302" y="680" w="34" h="17" bg="#101010"></glitch-art><glitch-art x="334" y="666" w="28" bg="#fff" line="M4 26v2M13 24v2" stroke="#000"></glitch-art><glitch-art x="334" y="680" w="2" h="17" bg="#101010"></glitch-art><glitch-art x="302" y="665" w="60" line="M0 12L60 5" stroke="#000" sw="2"></glitch-art>
    <glitch-art x="1190" y="616" w="12" density=".5" seed="57" colors="#fff #aaa #ddd"></glitch-art><glitch-art x="1202" y="616" w="8" h="9" density=".5" seed="61" colors="#fff #aaa"></glitch-art><glitch-art x="1208" y="616" w="14" density=".5" seed="58" colors="#fff #aaa #222 #ddd"></glitch-art>
    <div class="frag" style="left:219px;top:329px;height:14px;clip-path:inset(4px 0 0 0)">${F(31,"yp077")}</div><div class="frag" style="left:160px;top:344px">3a57</div>`;
  }
});
</script>
</body>
</html>
